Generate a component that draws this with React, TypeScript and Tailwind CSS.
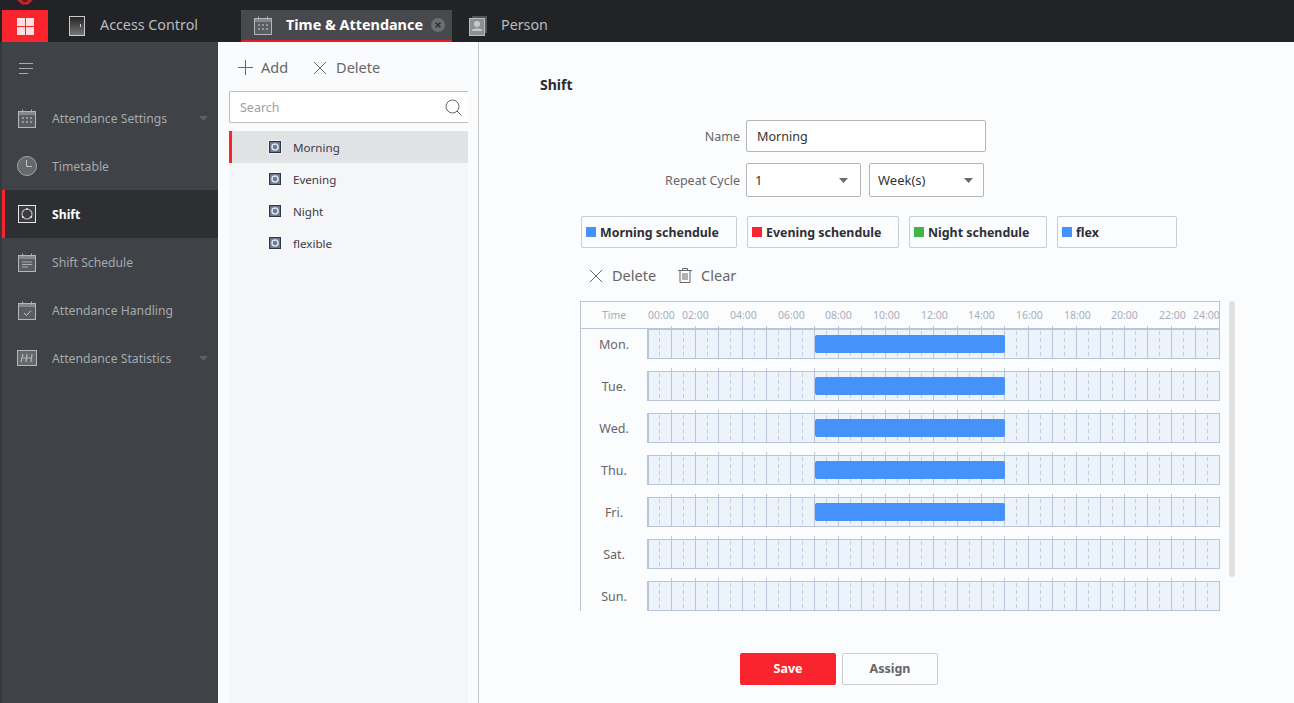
const font = { fontFamily: '"Noto Sans", "Open Sans", sans-serif' };

const days = ['Mon.', 'Tue.', 'Wed.', 'Thu.', 'Fri.', 'Sat.', 'Sun.'];
const hours = [
  { t: '00:00', x: 648 }, { t: '02:00', x: 682 }, { t: '04:00', x: 730 }, { t: '06:00', x: 778 },
  { t: '08:00', x: 825 }, { t: '10:00', x: 873 }, { t: '12:00', x: 921 }, { t: '14:00', x: 968 },
  { t: '16:00', x: 1016 }, { t: '18:00', x: 1064 }, { t: '20:00', x: 1111 }, { t: '22:00', x: 1159 },
  { t: '24:00', x: 1193 },
];
const schedules = [
  { name: 'Morning schendule', color: 'bg-[#4592fb]', width: 'w-[156px]' },
  { name: 'Evening schendule', color: 'bg-[#f9242d]', width: 'w-[152px]' },
  { name: 'Night schendule', color: 'bg-[#3fb54a]', width: 'w-[138px]' },
  { name: 'flex', color: 'bg-[#4592fb]', width: 'w-[120px]' },
];

function CalendarIcon({ children, size = 18 }: { children?: React.ReactNode; size?: number }) {
  return (
    <svg width={size} height={size + 1} viewBox="0 0 18 19" fill="none">
      <rect x="0.5" y="2.5" width="17" height="16" fill="#5a5d61" stroke="#b4b6b9" />
      <rect x="1" y="3" width="16" height="3" fill="#85878a" />
      <path d="M4.5 0.5v3M13.5 0.5v3" stroke="#b4b6b9" />
      {children}
    </svg>
  );
}

const calendarDots = (
  <path d="M4 9h2M8 9h2M12 9h2M4 13h2M8 13h2M12 13h2" stroke="#a9abae" strokeWidth="1.5" />
);

function ShiftGlyph() {
  return (
    <svg width="14" height="14" viewBox="0 0 14 14">
      <rect x="0.5" y="0.5" width="13" height="13" fill="#fff" />
      <rect x="1.5" y="1.5" width="11" height="11" fill="#6c7a92" stroke="#2f3440" />
      <circle cx="7" cy="7" r="3" fill="none" stroke="#dfe4ec" strokeWidth="1.5" />
    </svg>
  );
}

function Caret({ color = '#6a6a6a' }: { color?: string }) {
  return (
    <svg width="9" height="5" viewBox="0 0 9 5">
      <path d="M0 0h9L4.5 5z" fill={color} />
    </svg>
  );
}

function XIcon() {
  return (
    <svg width="14" height="14" viewBox="0 0 14 14" fill="none">
      <path d="M1 1l12 12M13 1L1 13" stroke="#666" />
    </svg>
  );
}

function NavItem({ icon, label, active, caret }: { icon: React.ReactNode; label: string; active?: boolean; caret?: boolean }) {
  return (
    <div className={`flex h-12 items-center pr-[10px] ${active ? 'bg-[#2e2f33] border-l-[3px] border-[#f9242d] pl-[12px]' : 'pl-[15px]'}`}>
      <div className="flex w-[20px] justify-center">{icon}</div>
      <span className={`ml-[15px] flex-1 pt-[2px] text-[12.2px] ${active ? 'font-bold text-white' : 'text-[#a6a9ad]'}`}>{label}</span>
      {caret && <Caret color="#5d6064" />}
    </div>
  );
}

function DayRow({ day, filled }: { day: string; filled: boolean }) {
  const lines = Array.from({ length: 23 }, (_, i) => Math.round(23.83 * (i + 1)));
  const dashes = Array.from({ length: 24 }, (_, i) => Math.round(23.83 * i + 11.9));
  return (
    <div className="flex h-[42px]">
      <div className="w-[66px] pt-[10px] text-center text-[12.5px] text-[#666]">{day}</div>
      <div className="relative h-[33px] flex-1">
        <svg width="573" height="33" className="block" shapeRendering="crispEdges">
          <rect x="0" y="3" width="573" height="30" fill="#edf3fb" />
          {lines.map((x) => (
            <line key={x} x1={x + 0.5} x2={x + 0.5} y1="0" y2="32" stroke="#b9c6da" />
          ))}
          {dashes.map((x) => (
            <line key={x} x1={x + 0.5} x2={x + 0.5} y1="5" y2="32" stroke="#c3cfe0" strokeDasharray="4 3" />
          ))}
          <line x1="0" x2="573" y1="3.5" y2="3.5" stroke="#b9c6da" />
          <line x1="0" x2="573" y1="32.5" y2="32.5" stroke="#b9c6da" />
          <line x1="1" x2="1" y1="3" y2="33" stroke="#b9c6da" strokeWidth="2" />
          <line x1="572.5" x2="572.5" y1="3" y2="33" stroke="#b9c6da" />
        </svg>
        {filled && <div className="absolute left-[168px] top-[9px] h-[18px] w-[190px] rounded-[2px] bg-[#4592fb]" />}
      </div>
    </div>
  );
}

export default function App() {
  return (
    <div className="flex h-[703px] w-[1294px] flex-col overflow-hidden bg-[#fbfcfe]" style={font}>
      {/* top bar */}
      <div className="relative flex h-[42px] shrink-0 items-end bg-[#222327] pl-[2px]">
        <svg width="16" height="5" viewBox="0 0 16 5" className="absolute left-[17px] top-0">
          <path d="M0 0h16l-5 4.5H5z" fill="#c8232a" />
          <path d="M5 0h6l-1.5 2h-3z" fill="#5a1a1e" />
        </svg>
        <div className="grid h-8 w-[46px] grid-cols-[8px_8px] content-center justify-center gap-[1px] bg-[#f9242d]">
          <div className="h-[8px] bg-[#ffdfe0]" />
          <div className="h-[8px] bg-[#ffdfe0]" />
          <div className="h-[8px] bg-[#ffdfe0]" />
          <div className="h-[8px] bg-[#ffdfe0]" />
        </div>
        <div className="flex h-8 w-[193px] items-center pl-[21px]">
          <svg width="16" height="20" viewBox="0 0 16 20">
            <defs>
              <linearGradient id="door" x1="0" y1="0" x2="0" y2="1">
                <stop offset="0" stopColor="#222" />
                <stop offset="1" stopColor="#777" />
              </linearGradient>
            </defs>
            <rect x="0.5" y="0.5" width="15" height="19" fill="url(#door)" stroke="#c9c9c9" />
            <rect x="11" y="8" width="1" height="3" fill="#ccc" />
          </svg>
          <span className="ml-[15px] pb-[2px] text-[14.3px] text-[#b9bbbe]">Access Control</span>
        </div>
        <div className="flex h-8 w-[211px] items-center border-b-2 border-[#e81e26] bg-[#47494d] pl-[13px]">
          <CalendarIcon size={18}>{calendarDots}</CalendarIcon>
          <span className="ml-[14px] text-[14.4px] font-bold text-white">Time &amp; Attendance</span>
          <div className="ml-[8px] flex h-[14px] w-[14px] items-center justify-center rounded-full bg-[#6b6d70]">
            <svg width="6" height="6" viewBox="0 0 6 6">
              <path d="M0.5 0.5l5 5M5.5 0.5l-5 5" stroke="#2c2d30" strokeWidth="1.4" />
            </svg>
          </div>
        </div>
        <div className="flex h-8 items-center pl-[17px]">
          <svg width="18" height="20" viewBox="0 0 18 20">
            <rect x="3" y="0" width="15" height="17" fill="#55575a" />
            <rect x="0.5" y="2.5" width="15" height="17" fill="#8d8f92" stroke="#b9bbbe" />
            <circle cx="8" cy="8" r="3" fill="#c8c9cb" />
            <path d="M3 14c1-2 9-2 10 0v1H3z" fill="#c8c9cb" />
          </svg>
          <span className="ml-[14px] pb-[2px] text-[14.3px] text-[#b9bbbe]">Person</span>
        </div>
      </div>

      <div className="flex min-h-0 flex-1">
        {/* sidebar */}
        <div className="w-[218px] shrink-0 border-l-2 border-[#36383c] bg-[#3f4246]">
          <div className="flex h-[52px] items-center pl-[17px]">
            <svg width="14" height="13" viewBox="0 0 14 13" stroke="#a6a9ad">
              <path d="M0 1.5h14M0 6.5h14M0 11.5h9" fill="none" />
            </svg>
          </div>
          <NavItem icon={<CalendarIcon>{calendarDots}</CalendarIcon>} label="Attendance Settings" caret />
          <NavItem
            icon={
              <svg width="20" height="20" viewBox="0 0 20 20" fill="none">
                <circle cx="10" cy="10" r="9.5" fill="#66686c" stroke="#a5a7aa" />
                <path d="M9.5 4v6.5H15" stroke="#c2c4c6" />
              </svg>
            }
            label="Timetable"
          />
          <NavItem
            active
            icon={
              <svg width="18" height="18" viewBox="0 0 18 18" fill="none">
                <rect x="0.5" y="0.5" width="17" height="17" fill="#3a3c40" stroke="#e5e5e5" />
                <circle cx="9" cy="9" r="5" stroke="#b5b7ba" strokeWidth="1.2" />
                <circle cx="9" cy="4" r="1" fill="#e5e5e5" />
                <circle cx="4.8" cy="12" r="1" fill="#e5e5e5" />
                <circle cx="13.2" cy="12" r="1" fill="#e5e5e5" />
              </svg>
            }
            label="Shift"
          />
          <NavItem
            icon={
              <CalendarIcon>
                <path d="M4 9h10M4 11.5h10M4 14h6" stroke="#a9abae" />
              </CalendarIcon>
            }
            label="Shift Schedule"
          />
          <NavItem
            icon={
              <CalendarIcon>
                <path d="M6 12l2.5 2.5L13 9.5" stroke="#c2c4c6" />
              </CalendarIcon>
            }
            label="Attendance Handling"
          />
          <NavItem
            icon={
              <svg width="20" height="16" viewBox="0 0 20 16" fill="none">
                <rect x="0.5" y="0.5" width="19" height="15" fill="#66686c" stroke="#b4b6b9" />
                <path d="M4 12l2-8M6 8h8M9 12l1-8M14 12l1-8" stroke="#b4b6b9" strokeWidth="1.2" />
              </svg>
            }
            label="Attendance Statistics"
            caret
          />
        </div>

        {/* shift list */}
        <div className="flex w-[261px] shrink-0 flex-col border-r border-[#c8c8c8] bg-[#fafbfd] pl-[11px] pr-[10px]">
          <div className="flex h-[49px] shrink-0 items-center pl-[9px] pt-[2px] text-[14.5px] text-[#666]">
            <svg width="15" height="15" viewBox="0 0 15 15">
              <path d="M7.5 0v15M0 7.5h15" stroke="#666" />
            </svg>
            <span className="ml-[8px]">Add</span>
            <div className="ml-[25px]">
              <XIcon />
            </div>
            <span className="ml-[9px]">Delete</span>
          </div>
          <div className="flex h-8 shrink-0 items-center justify-between rounded-l-[2px] border-y border-l border-[#bdbdbd] bg-white pl-[10px] pr-[6px]">
            <span className="pt-[2px] text-[12.5px] text-[#a0a0a0]">Search</span>
            <svg width="17" height="17" viewBox="0 0 17 17" fill="none" stroke="#666">
              <circle cx="7.5" cy="7.5" r="6.5" />
              <path d="M12 12l4.5 4.5" />
            </svg>
          </div>
          <div className="mt-2 flex-1 bg-[#f5f6f8]">
            {['Morning', 'Evening', 'Night', 'flexible'].map((name, i) => (
              <div
                key={name}
                className={`flex h-8 items-center text-[11.6px] text-[#3c3a48] ${
                  i === 0 ? 'border-l-[3px] border-[#f9242d] bg-[#e1e2e4] pl-[36px]' : 'pl-[39px]'
                }`}
              >
                <ShiftGlyph />
                <span className="ml-[11px] pt-[2px]">{name}</span>
              </div>
            ))}
          </div>
        </div>

        {/* editor */}
        <div className="min-w-0 flex-1">
          <div className="pl-[61px] pt-[33px] text-[14px] font-bold leading-5 text-[#2b2b2b]">Shift</div>
          <div className="mt-[25px] flex h-8 items-center">
            <div className="w-[261px] pt-[2px] text-right text-[12.5px] text-[#666]">Name</div>
            <div className="ml-[6px] flex h-8 w-[240px] items-center rounded-[2px] border border-[#b5b5b5] bg-white pl-[10px] pt-[2px] text-[12.6px] text-[#333]">
              Morning
            </div>
          </div>
          <div className="mt-[11px] flex h-[34px] items-center">
            <div className="w-[261px] pt-[2px] text-right text-[12.5px] text-[#666]">Repeat Cycle</div>
            <div className="ml-[6px] flex h-[34px] w-[115px] items-center justify-between rounded-[2px] border border-[#b5b5b5] bg-white pl-[8px] pr-[12px] text-[13px] text-[#333]">
              <span className="pt-[2px]">1</span>
              <Caret />
            </div>
            <div className="ml-2 flex h-[34px] w-[115px] items-center justify-between rounded-[2px] border border-[#b5b5b5] bg-white pl-[8px] pr-[10px] text-[13px] text-[#333]">
              <span className="pt-[2px]">Week(s)</span>
              <Caret />
            </div>
          </div>
          <div className="ml-[102px] mt-[19px] flex gap-[10px]">
            {schedules.map((s) => (
              <div
                key={s.name}
                className={`flex h-8 items-center rounded-[2px] border border-[#c9ccd1] pl-[4px] ${s.width}`}
              >
                <div className={`h-[10px] w-[10px] ${s.color}`} />
                <span className="ml-[4px] pt-[2px] text-[12.4px] font-bold text-[#2f2f36]">{s.name}</span>
              </div>
            ))}
          </div>
          <div className="ml-[110px] mt-[14px] flex h-[27px] items-center text-[14.5px] text-[#666]">
            <XIcon />
            <span className="ml-[9px]">Delete</span>
            <svg width="14" height="15" viewBox="0 0 14 15" fill="none" stroke="#666" className="ml-[22px]">
              <path d="M0 2.5h14M4.5 2.5V0.5h5v2M2 2.5v12h10v-12M5 5v7M7 5v7M9 5v7" />
            </svg>
            <span className="ml-[9px]">Clear</span>
          </div>
          <div className="ml-[101px] mt-[12px] flex items-start">
            <div className="w-[640px] border-l border-[#b9c6da]">
              <div className="relative h-[28px] border-y border-r border-[#b9c6da] text-[10.5px] leading-[26px] text-[#a9afba]">
                <span className="absolute left-[21px] top-0">Time</span>
                {hours.map((h) => (
                  <span key={h.t} className="absolute top-0" style={{ left: h.x - 581 }}>
                    {h.t}
                  </span>
                ))}
              </div>
              <div className="-mt-[3px] h-[285px] overflow-hidden">
                {days.map((d, i) => (
                  <DayRow key={d} day={d} filled={i < 5} />
                ))}
              </div>
            </div>
            <div className="ml-[9px] h-[276px] w-[6px] rounded-[3px] bg-[#e0e0e0]" />
          </div>
          <div className="ml-[261px] mt-[42px] flex gap-[6px]">
            <div className="flex h-8 w-[96px] items-center justify-center rounded-[2px] bg-[#f9242d] text-[12.5px] font-bold text-white">
              Save
            </div>
            <div className="flex h-8 w-[96px] items-center justify-center rounded-[2px] border border-[#c9ccd1] text-[12.5px] font-bold text-[#666]">
              Assign
            </div>
          </div>
        </div>
      </div>
    </div>
  );
}
